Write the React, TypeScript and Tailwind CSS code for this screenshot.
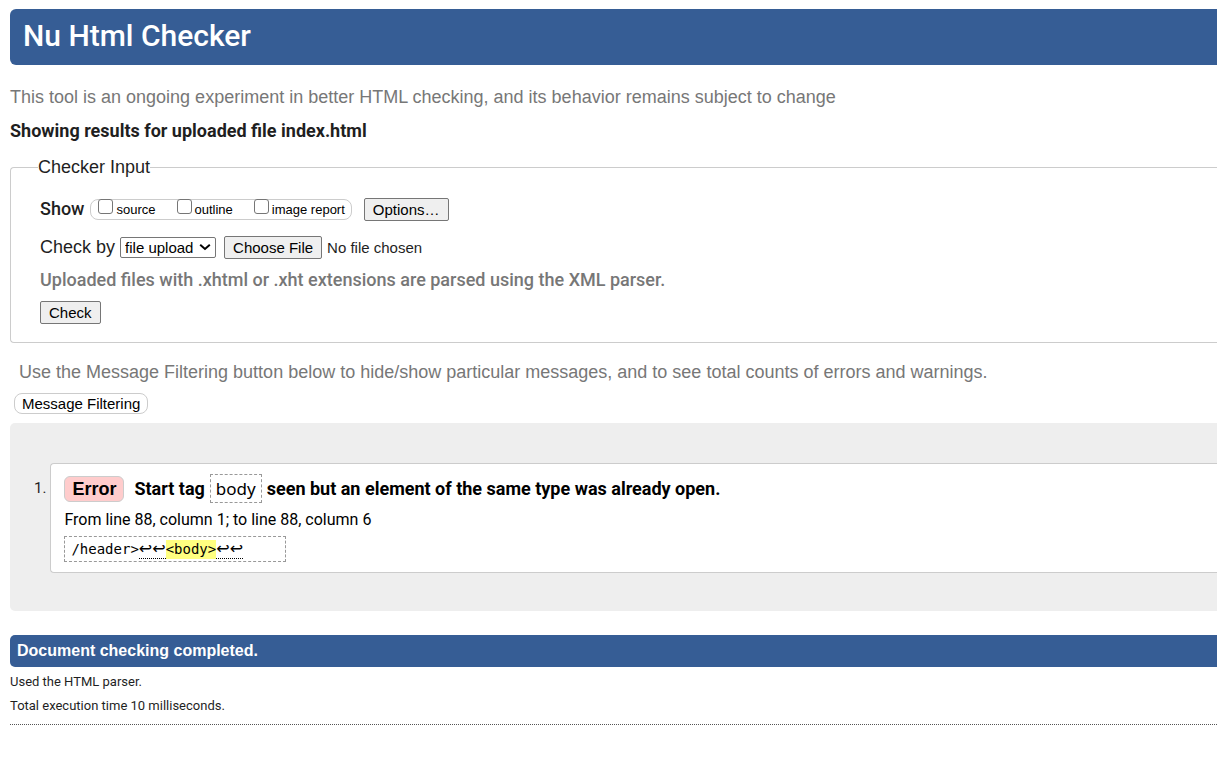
import React from "react";

const sources = [
  { id: "source", label: "source" },
  { id: "outline", label: "outline" },
  { id: "image-report", label: "image report" },
];

const din = "font-['Roboto',sans-serif]";
const button =
  "h-[23px] rounded-[2px] border border-[#767676] bg-[#efefef] px-2 text-[15px] leading-[21px] text-black";

function CheckerInput() {
  return (
    <fieldset className="mt-[13px] rounded-l border border-r-0 border-[#ccc] pb-[18px] pl-[29px]">
      <legend className="-ml-[2px] text-lg leading-[22px]">Checker Input</legend>
      <div className="mt-[19px] flex items-center">
        <span className={`${din} text-lg leading-[24px] font-medium`}>Show</span>
        <div className="ml-[6px] flex h-[21px] items-center gap-[21px] rounded-lg border border-[#ccc] pr-[6px] pl-[7px]">
          {sources.map((s) => (
            <label key={s.id} htmlFor={s.id} className="flex items-end gap-[3px] text-[13px] leading-[18px] text-black">
              <input
                id={s.id}
                type="checkbox"
                className="mb-[5px] size-[15px] appearance-none rounded-[3px] border border-[#767676] bg-white checked:bg-[#365d95]"
              />
              {s.label}
            </label>
          ))}
        </div>
        <button type="button" className={`${button} ml-3`}>Options…</button>
      </div>
      <div className="mt-[14px] flex items-center">
        <label htmlFor="docselect" className="text-lg leading-[24px]">Check by</label>
        <div className="relative ml-[5px] flex items-center">
          <select
            id="docselect"
            className="h-[21px] w-[96px] appearance-none rounded-[2px] border border-[#767676] bg-white pl-[4px] text-[15px] leading-[19px] text-black"
          >
            <option>file upload</option>
            <option>address</option>
            <option>text input</option>
          </select>
          <svg className="pointer-events-none absolute right-[5px] size-[12px]" viewBox="0 0 12 12" fill="none" stroke="#000" strokeWidth="2">
            <path d="M1.2 3.8 6 8l4.800-4.200" />
          </svg>
        </div>
        <input
          type="file"
          aria-label="File to check"
          className="ml-2 text-[15px] leading-[23px] file:mr-[5px] file:h-[23px] file:rounded-[2px] file:border file:border-solid file:border-[#767676] file:bg-[#efefef] file:px-2 file:leading-[21px] file:text-black"
        />
      </div>
      <p className={`${din} mt-[9px] text-lg leading-[24px] font-medium text-[#777]`}>
        Uploaded files with .xhtml or .xht extensions are parsed using the XML parser.
      </p>
      <button type="button" className={`${button} mt-[9px] block`}>Check</button>
    </fieldset>
  );
}

function LineBreaks() {
  return (
    <span className="border-b border-dotted border-black font-['DejaVu_Sans',sans-serif] text-base leading-[18px]">
      ↩↩
    </span>
  );
}

function Messages() {
  return (
    <ol className="mt-[9px] rounded-l-[5px] bg-[#eee] pt-10 pb-[38px] pl-6">
      <li className="flex">
        <span className={`${din} pt-[13px] text-[15px] leading-[24px]`}>1.</span>
        <div className="ml-[4px] min-w-0 flex-1 rounded-l border border-r-0 border-[#ccc] bg-white pt-[10px] pb-[10px] pl-[13px] text-black">
          <p className={`${din} flex items-center text-lg leading-[24px] font-bold`}>
            <strong className="mr-[10px] rounded-md border border-[#ccc] bg-[#fcc] px-[7px] font-['Liberation_Sans',sans-serif] text-lg leading-[24px]">
              Error
            </strong>
            Start tag
            <code className="mx-[5px] border border-dashed border-[#999] px-[5px] font-['Noto_Sans',sans-serif] text-[17px] leading-[27px] font-normal">
              body
            </code>
            seen but an element of the same type was already open.
          </p>
          <p className={`${din} mt-[5px] text-base leading-[24px]`}>From line 88, column 1; to line 88, column 6</p>
          <code className="mt-[4px] flex h-[26px] w-[222px] items-center border border-dashed border-[#999] pl-[6px] font-['DejaVu_Sans_Mono',monospace] text-sm leading-[19px]">
            <span>/header&gt;</span>
            <LineBreaks />
            <mark className="bg-[#ffff80] text-black">&lt;body&gt;</mark>
            <LineBreaks />
          </code>
        </div>
      </li>
    </ol>
  );
}

export default function App() {
  return (
    <main className="min-h-screen bg-white pt-[9px] pl-[10px] font-['Liberation_Sans',sans-serif] text-[#1f1f1f]">
      <h1 className={`${din} rounded-l-md bg-[#365d95] px-[13px] pt-[7px] pb-[9px] text-[30px] leading-[40px] font-medium text-white`}>
        Nu Html Checker
      </h1>
      <p className="mt-5 text-lg leading-[24px] text-[#777]">
        This tool is an ongoing experiment in better HTML checking, and its behavior remains subject to change
      </p>
      <h2 className={`${din} mt-[10px] text-lg leading-[24px] font-bold`}>
        Showing results for uploaded file index.html
      </h2>
      <CheckerInput />
      <p className="mt-[17px] ml-[9px] text-lg leading-[24px] text-[#777]">
        Use the Message Filtering button below to hide/show particular messages, and to see total counts of errors and warnings.
      </p>
      <button type="button" className="mt-[9px] ml-[4px] block h-[21px] rounded-lg border border-[#ccc] bg-white px-[7px] text-[15px] leading-[19px] text-black">
        Message Filtering
      </button>
      <Messages />
      <p className="mt-6 rounded-l-[5px] bg-[#365d95] px-[7px] text-base leading-[32px] font-bold text-white">
        Document checking completed.
      </p>
      <div className={`${din} border-b border-dotted border-[#555] pt-[3px] pb-[6px] text-[13px] leading-[24px]`}>
        <p>Used the HTML parser.</p>
        <p>Total execution time 10 milliseconds.</p>
      </div>
    </main>
  );
}
